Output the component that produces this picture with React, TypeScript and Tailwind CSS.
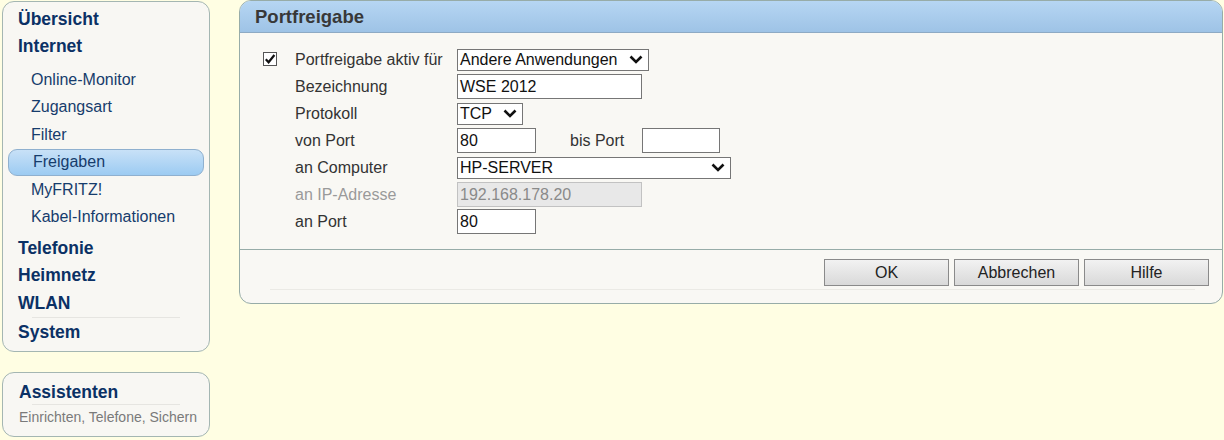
import React from "react";

const Chevron = () => (
  <svg width="14" height="9" viewBox="0 0 14 9" className="shrink-0">
    <polyline points="1.5,1.5 7,7 12.5,1.5" fill="none" stroke="#111" strokeWidth="2.6" strokeLinejoin="miter" />
  </svg>
);

const Select = ({ value, w }: { value: string; w: string }) => (
  <div className={`${w} h-[22px] border border-[#767676] bg-white flex items-center justify-between pl-[2px] pr-[5px] text-[16px] text-[#111]`}>
    <span className="leading-none">{value}</span>
    <Chevron />
  </div>
);

const Input = ({ value, w, disabled }: { value?: string; w: string; disabled?: boolean }) => (
  <div
    className={`${w} h-[25px] border flex items-center pl-[2px] text-[16px] ${
      disabled ? "bg-[#e8e8e8] border-[#c2c2c2] text-[#8a8a8a]" : "bg-white border-[#767676] text-[#111]"
    }`}
  >
    <span className="leading-none">{value}</span>
  </div>
);

const Row = ({ label, gray, children }: { label: string; gray?: boolean; children: React.ReactNode }) => (
  <div className="h-[27px] flex items-center">
    <div className={`w-[162px] text-[16px] ${gray ? "text-[#9a9a9a]" : "text-[#333]"}`}>{label}</div>
    {children}
  </div>
);

const Main = ({ label, tall }: { label: string; tall?: boolean }) => (
  <div className={`${tall ? "h-[27.6px]" : "h-[27px]"} flex items-center pl-[15px] text-[17.5px] font-bold text-[#0b3165]`}>{label}</div>
);

const Sub = ({ label, active }: { label: string; active?: boolean }) =>
  active ? (
    <div className="h-[27.4px] flex items-center px-[5px]">
      <div className="w-full h-[27px] rounded-[9px] border border-[#8fb0cf] bg-gradient-to-b from-[#c8e1f7] to-[#9ccbf2] flex items-center pl-[24px] text-[16px] text-[#163c6c]">
        {label}
      </div>
    </div>
  ) : (
    <div className="h-[27.4px] flex items-center pl-[28px] text-[16px] text-[#163c6c]">{label}</div>
  );

const Button = ({ label }: { label: string }) => (
  <div className="w-[125px] h-[27px] border border-[#8a8a8a] bg-gradient-to-b from-[#f2f2f2] to-[#d9d9d9] flex items-center justify-center text-[16px] text-[#222]">
    {label}
  </div>
);

export default function App() {
  return (
    <div className="w-[1224px] h-[440px] bg-[#fffee3] flex font-['Liberation_Sans',Arial,sans-serif] overflow-hidden">
      {/* Sidebar */}
      <div className="ml-[2px] mt-px w-[208px] flex flex-col">
        <nav className="h-[351px] rounded-[12px] border border-[#a4b6b2] bg-[#f8f7f3] pt-[4px] flex flex-col">
          <Main label="Übersicht" />
          <Main label="Internet" />
          <div className="h-[6.3px]" />
          <Sub label="Online-Monitor" />
          <Sub label="Zugangsart" />
          <Sub label="Filter" />
          <Sub label="Freigaben" active />
          <Sub label="MyFRITZ!" />
          <Sub label="Kabel-Informationen" />
          <div className="h-[3.5px]" />
          <Main label="Telefonie" tall />
          <Main label="Heimnetz" tall />
          <Main label="WLAN" tall />
          <div className="mx-[29px] h-px bg-[#e6e5e1]" />
          <Main label="System" tall />
        </nav>
        <div className="mt-[20px] h-[65px] rounded-[12px] border border-[#a4b6b2] bg-[#f8f7f3] flex flex-col pt-[7px]">
          <div className="h-[24px] flex items-center pl-[16px] text-[17.5px] font-bold text-[#0b3165]">Assistenten</div>
          <div className="mx-[29px] h-px bg-[#e6e5e1]" />
          <div className="h-[24px] flex items-center pl-[16px] text-[14px] text-[#7a7a7a]">Einrichten, Telefone, Sichern</div>
        </div>
      </div>

      {/* Main panel */}
      <div className="ml-[29px] w-[984px] h-[304px] rounded-[12px] border border-[#97aca8] bg-[#f9f8f4] flex flex-col overflow-hidden">
        <div className="h-[32px] shrink-0 bg-gradient-to-b from-[#b6d6f3] to-[#9ec3e6] border-b border-[#8eaac4] flex items-center pl-[15px] text-[18.5px] font-bold text-[#383838]">
          Portfreigabe
        </div>
        <div className="pt-[13px] pb-[14px] pl-[23px] flex">
          <div className="pt-[6px]">
            <div className="w-[14px] h-[14px] border border-[#555] bg-white flex items-center justify-center">
              <svg width="12" height="12" viewBox="0 0 12 12">
                <polyline points="1.8,6.2 4.6,9.2 10.4,2" fill="none" stroke="#111" strokeWidth="2.2" />
              </svg>
            </div>
          </div>
          <div className="ml-[18px] flex flex-col">
            <Row label="Portfreigabe aktiv für">
              <Select value="Andere Anwendungen" w="w-[192px]" />
            </Row>
            <Row label="Bezeichnung">
              <Input value="WSE 2012" w="w-[185px]" />
            </Row>
            <Row label="Protokoll">
              <Select value="TCP" w="w-[66px]" />
            </Row>
            <Row label="von Port">
              <Input value="80" w="w-[79px]" />
              <span className="ml-[34px] w-[72px] text-[16px] text-[#333]">bis Port</span>
              <Input w="w-[78px]" />
            </Row>
            <Row label="an Computer">
              <Select value="HP-SERVER" w="w-[274px]" />
            </Row>
            <Row label="an IP-Adresse" gray>
              <Input value="192.168.178.20" w="w-[185px]" disabled />
            </Row>
            <Row label="an Port">
              <Input value="80" w="w-[79px]" />
            </Row>
          </div>
        </div>
        <div className="h-px bg-[#97aca8]" />
        <div className="pt-[9px] pr-[13px] flex justify-end gap-[5px]">
          <Button label="OK" />
          <Button label="Abbrechen" />
          <Button label="Hilfe" />
        </div>
        <div className="mt-[3px] ml-[30px] mr-[27px] h-px bg-[#ebeae5]" />
      </div>
    </div>
  );
}
